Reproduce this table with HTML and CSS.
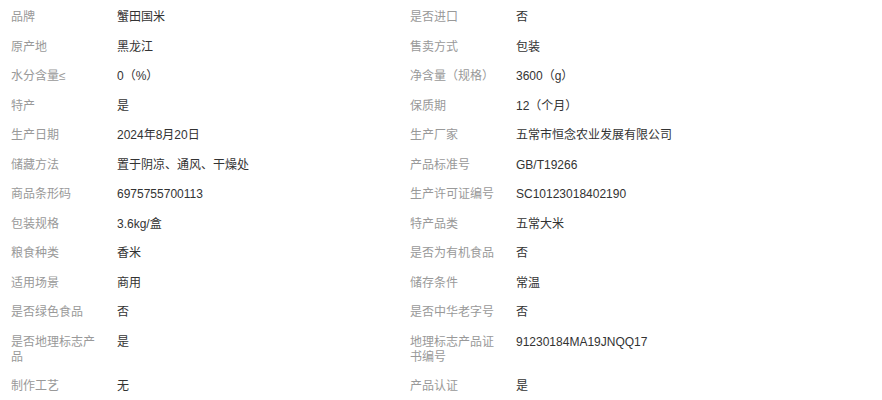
FILE: index.html
```html
<!DOCTYPE html>
<html lang="zh-CN">
<head>
    <meta charset="UTF-8">
    <title>商品参数</title>
    <link rel="stylesheet" href="styles.css">
</head>
<body>

<div class="params">
    <div class="item"><span class="label">品牌</span><span class="value">蟹田国米</span></div>
    <div class="item"><span class="label">是否进口</span><span class="value">否</span></div>
    <div class="item"><span class="label">原产地</span><span class="value">黑龙江</span></div>
    <div class="item"><span class="label">售卖方式</span><span class="value">包装</span></div>
    <div class="item"><span class="label">水分含量≤</span><span class="value">0（%）</span></div>
    <div class="item"><span class="label">净含量（规格）</span><span class="value">3600（g）</span></div>
    <div class="item"><span class="label">特产</span><span class="value">是</span></div>
    <div class="item"><span class="label">保质期</span><span class="value">12（个月）</span></div>
    <div class="item"><span class="label">生产日期</span><span class="value">2024年8月20日</span></div>
    <div class="item"><span class="label">生产厂家</span><span class="value">五常市恒念农业发展有限公司</span></div>
    <div class="item"><span class="label">储藏方法</span><span class="value">置于阴凉、通风、干燥处</span></div>
    <div class="item"><span class="label">产品标准号</span><span class="value">GB/T19266</span></div>
    <div class="item"><span class="label">商品条形码</span><span class="value">6975755700113</span></div>
    <div class="item"><span class="label">生产许可证编号</span><span class="value">SC10123018402190</span></div>
    <div class="item"><span class="label">包装规格</span><span class="value">3.6kg/盒</span></div>
    <div class="item"><span class="label">特产品类</span><span class="value">五常大米</span></div>
    <div class="item"><span class="label">粮食种类</span><span class="value">香米</span></div>
    <div class="item"><span class="label">是否为有机食品</span><span class="value">否</span></div>
    <div class="item"><span class="label">适用场景</span><span class="value">商用</span></div>
    <div class="item"><span class="label">储存条件</span><span class="value">常温</span></div>
    <div class="item"><span class="label">是否绿色食品</span><span class="value">否</span></div>
    <div class="item"><span class="label">是否中华老字号</span><span class="value">否</span></div>
    <div class="item"><span class="label">是否地理标志产品</span><span class="value">是</span></div>
    <div class="item"><span class="label">地理标志产品证书编号</span><span class="value">91230184MA19JNQQ17</span></div>
    <div class="item"><span class="label">制作工艺</span><span class="value">无</span></div>
    <div class="item"><span class="label">产品认证</span><span class="value">是</span></div>
</div>

</body>
</html>
```

FILE: styles.css
```css
body {
    margin: 0;
    background-color: #ffffff;
    font-family: "Liberation Sans", "Noto Sans CJK SC", sans-serif;
    font-size: 12px;
}
.params {
    display: grid;
    grid-template-columns: 399px 399px;
    padding: 3px 0 0 11px;
}
.item {
    display: flex;
    line-height: 15px;
    padding: 7.25px 0;
}
.label {
    flex: 0 0 90px;
    margin-right: 16px;
    color: #999999;
}
.value {
    color: #333333;
}
```
